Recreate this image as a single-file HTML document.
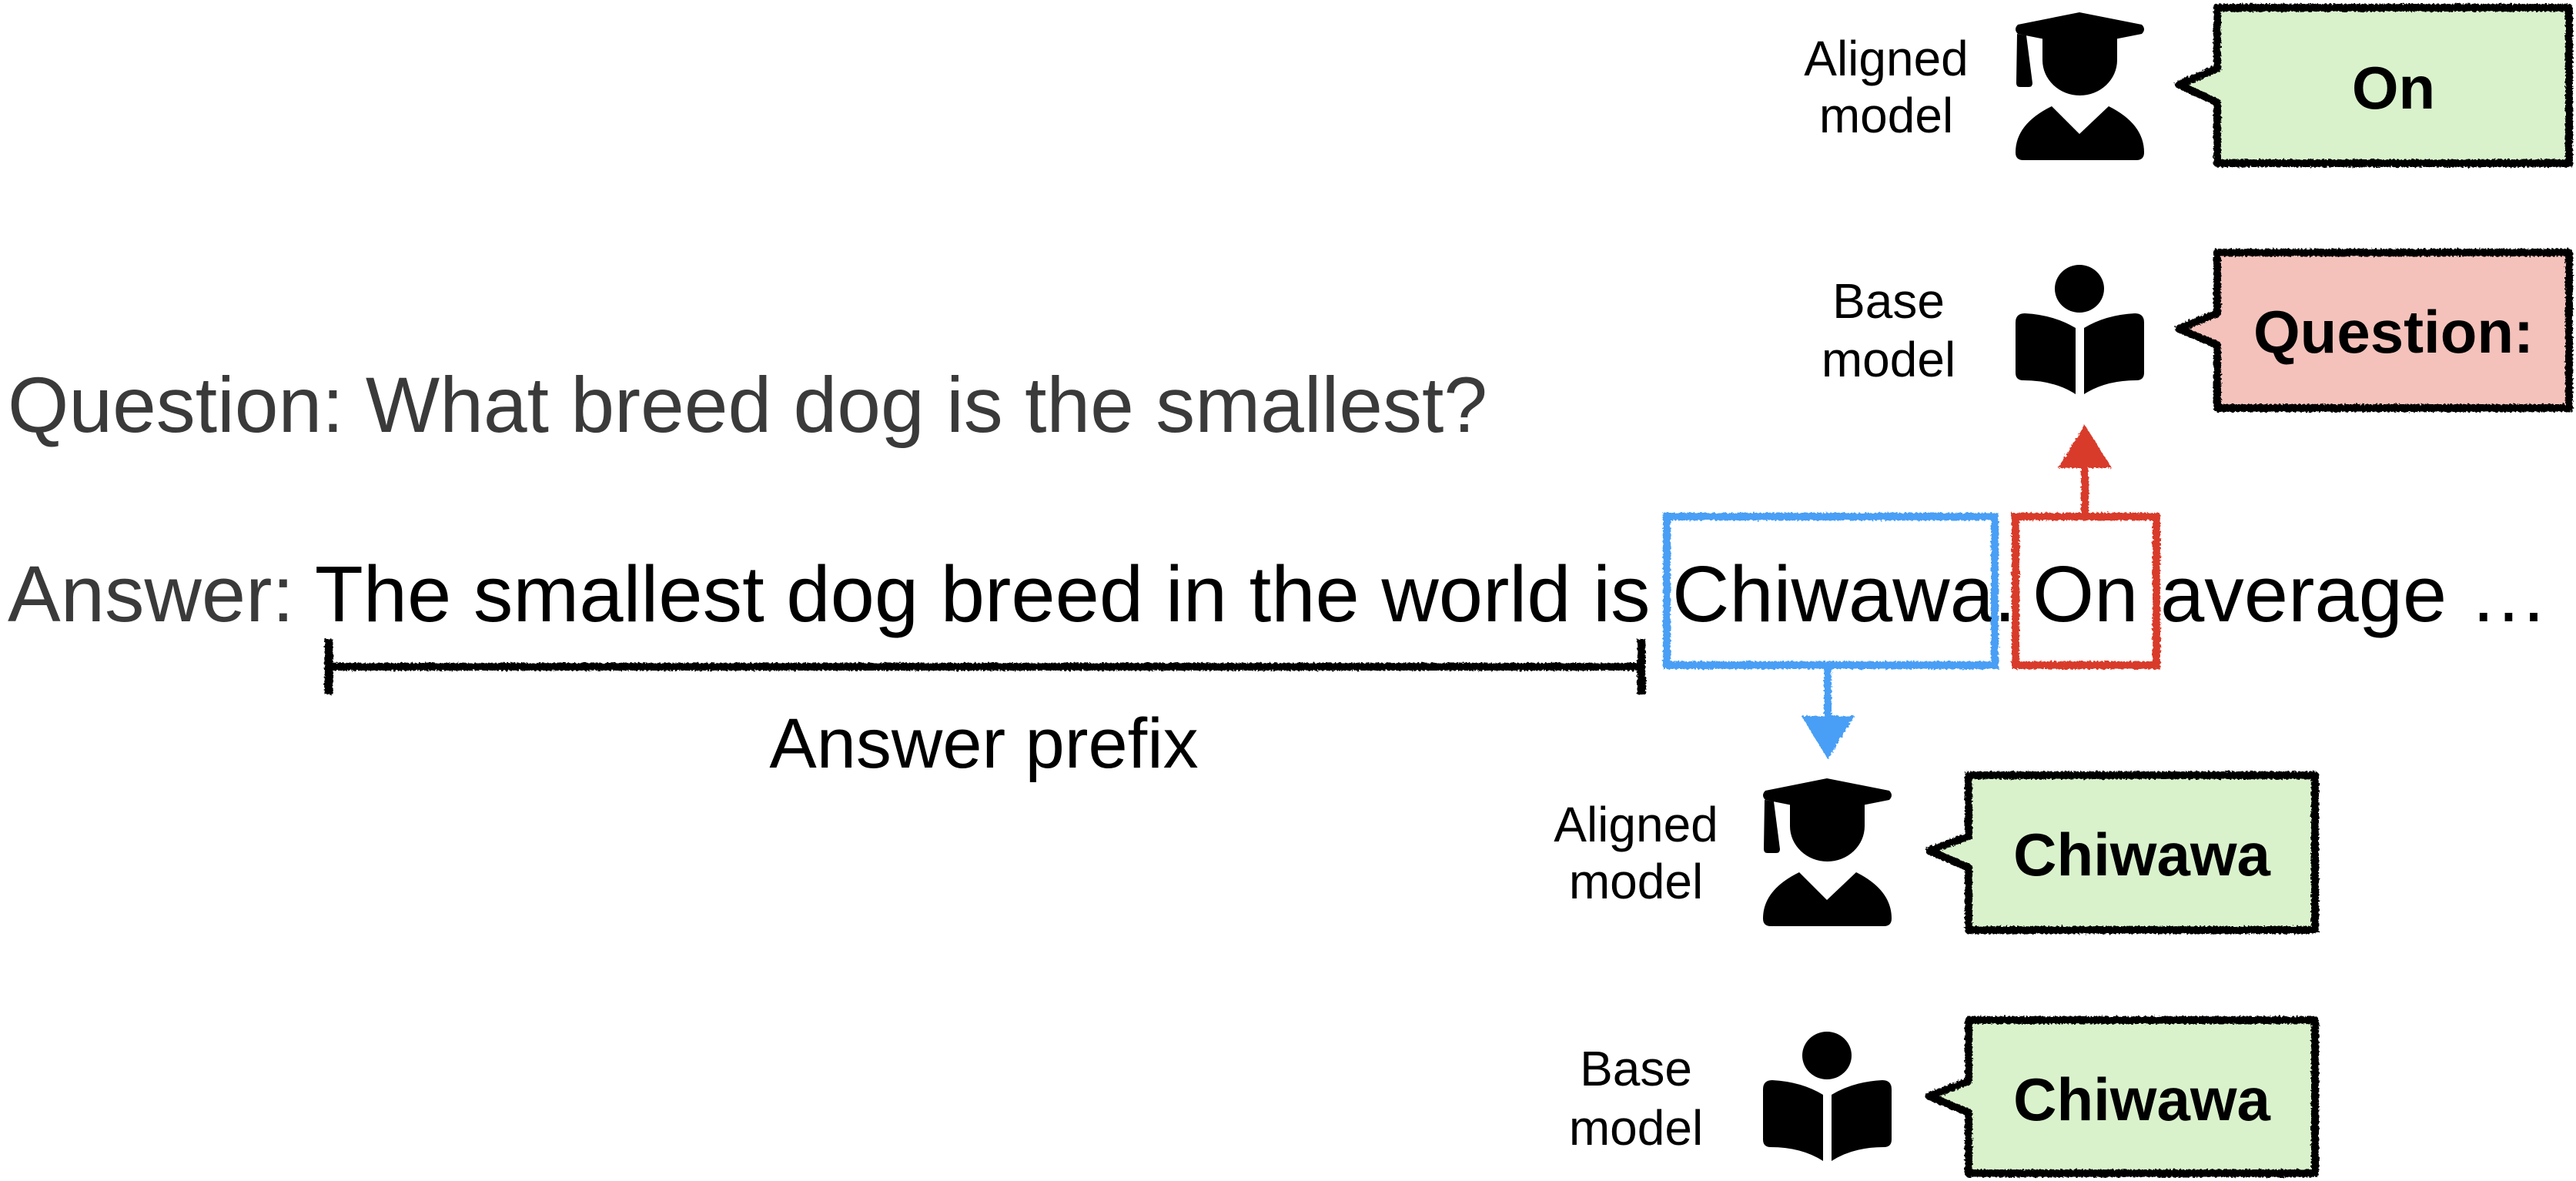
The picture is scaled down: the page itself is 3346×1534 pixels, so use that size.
<!DOCTYPE html>
<html><head><meta charset="utf-8"><style>
html,body{margin:0;padding:0;background:#fff;}
svg{display:block;}
text{font-family:"Liberation Sans",Arial,sans-serif;}
</style></head><body>
<svg width="3346" height="1534" viewBox="0 0 3346 1534" xmlns="http://www.w3.org/2000/svg">
<defs>
<filter id="rough" x="-5%" y="-5%" width="110%" height="110%">
<feTurbulence type="fractalNoise" baseFrequency="0.35" numOctaves="2" seed="3"/>
<feDisplacementMap in="SourceGraphic" scale="5"/>
</filter>
<g id="grad">
<path d="M3,16 L83,0 L164,16 Q170,22 164,28 L83,44 L3,28 Q-3,22 3,16Z"/>
<path d="M2,28 L14,30 L22,92 Q22,97 17,97 L6,97 Q1,97 1,92 Z"/>
<path d="M35,34 L132,34 L132,62 A48.5,46 0 0 1 35,62 Z"/>
<path d="M47,122 L83,158 L121,122 Q167,145 167,182 Q167,192 157,192 L10,192 Q0,192 0,182 Q0,145 47,122Z"/>
</g>
<g id="book">
<ellipse cx="83" cy="31" rx="32" ry="31"/>
<path d="M0,75 Q0,63 12,63 Q50,65 78,82 L78,168 Q50,150 10,150 Q0,150 0,140Z"/>
<path d="M167,75 Q167,63 155,63 Q117,65 89,82 L89,168 Q117,150 157,150 Q167,150 167,140Z"/>
</g>
</defs>

<text x="10" y="561" font-size="102" fill="#3a3a3a">Question: What breed dog is the smallest?</text>
<text y="807" font-size="103" fill="#000"><tspan x="10" fill="#3a3a3a">Answer:</tspan><tspan> The smallest dog breed in the world is</tspan><tspan x="2172">Chiwawa.</tspan><tspan x="2640">On</tspan><tspan x="2806">average …</tspan></text>

<g filter="url(#rough)" stroke="#000" stroke-width="10" fill="none">
<line x1="427" y1="866" x2="2132" y2="866"/>
<line x1="427" y1="830" x2="427" y2="902" stroke-width="11"/>
<line x1="2132" y1="830" x2="2132" y2="902" stroke-width="11"/>
</g>
<text x="1278" y="997" font-size="92" text-anchor="middle">Answer prefix</text>

<g filter="url(#rough)">
<rect x="2165" y="671" width="426" height="193" fill="none" stroke="#4a9ff5" stroke-width="10"/>
<line x1="2374" y1="866" x2="2374" y2="936" stroke="#4a9ff5" stroke-width="10"/>
<polygon points="2340,930 2409,930 2374,986" fill="#4a9ff5"/>
<rect x="2618" y="671" width="183" height="193" fill="none" stroke="#d93a2b" stroke-width="10"/>
<line x1="2708" y1="668" x2="2708" y2="600" stroke="#d93a2b" stroke-width="10"/>
<polygon points="2673,608 2743,608 2708,552" fill="#d93a2b"/>
</g>

<text font-size="64" text-anchor="middle"><tspan x="2450" y="98">Aligned</tspan><tspan x="2450" y="172">model</tspan></text>
<use href="#grad" transform="translate(2618,16)"/>
<text font-size="64" text-anchor="middle"><tspan x="2453" y="413">Base</tspan><tspan x="2453" y="489">model</tspan></text>
<use href="#book" transform="translate(2618,344)"/>

<g filter="url(#rough)" stroke="#000" stroke-width="10" stroke-linejoin="round">
<path d="M2880,10 L3337,10 L3337,212 L2880,212 L2880,133 L2830,110 L2880,89 Z" fill="#d9f2cc"/>
<path d="M2880,328 L3337,328 L3337,530 L2880,530 L2880,448 L2830,427 L2880,407 Z" fill="#f4c2bb"/>
<path d="M2557,1007 L3007,1007 L3007,1208 L2557,1208 L2557,1127 L2506,1105 L2557,1086 Z" fill="#d9f2cc"/>
<path d="M2557,1325 L3007,1325 L3007,1524 L2557,1524 L2557,1445 L2506,1424 L2557,1404 Z" fill="#d9f2cc"/>
</g>
<text x="3109" y="141" font-size="78" font-weight="bold" text-anchor="middle">On</text>
<text x="3109" y="458" font-size="78" font-weight="bold" text-anchor="middle">Question:</text>
<text x="2782" y="1137" font-size="78" font-weight="bold" text-anchor="middle">Chiwawa</text>
<text x="2782" y="1455" font-size="78" font-weight="bold" text-anchor="middle">Chiwawa</text>

<text font-size="64" text-anchor="middle"><tspan x="2125" y="1093">Aligned</tspan><tspan x="2125" y="1167">model</tspan></text>
<use href="#grad" transform="translate(2290,1011)"/>
<text font-size="64" text-anchor="middle"><tspan x="2125" y="1410">Base</tspan><tspan x="2125" y="1487">model</tspan></text>
<use href="#book" transform="translate(2290,1340)"/>
</svg>
</body></html>
